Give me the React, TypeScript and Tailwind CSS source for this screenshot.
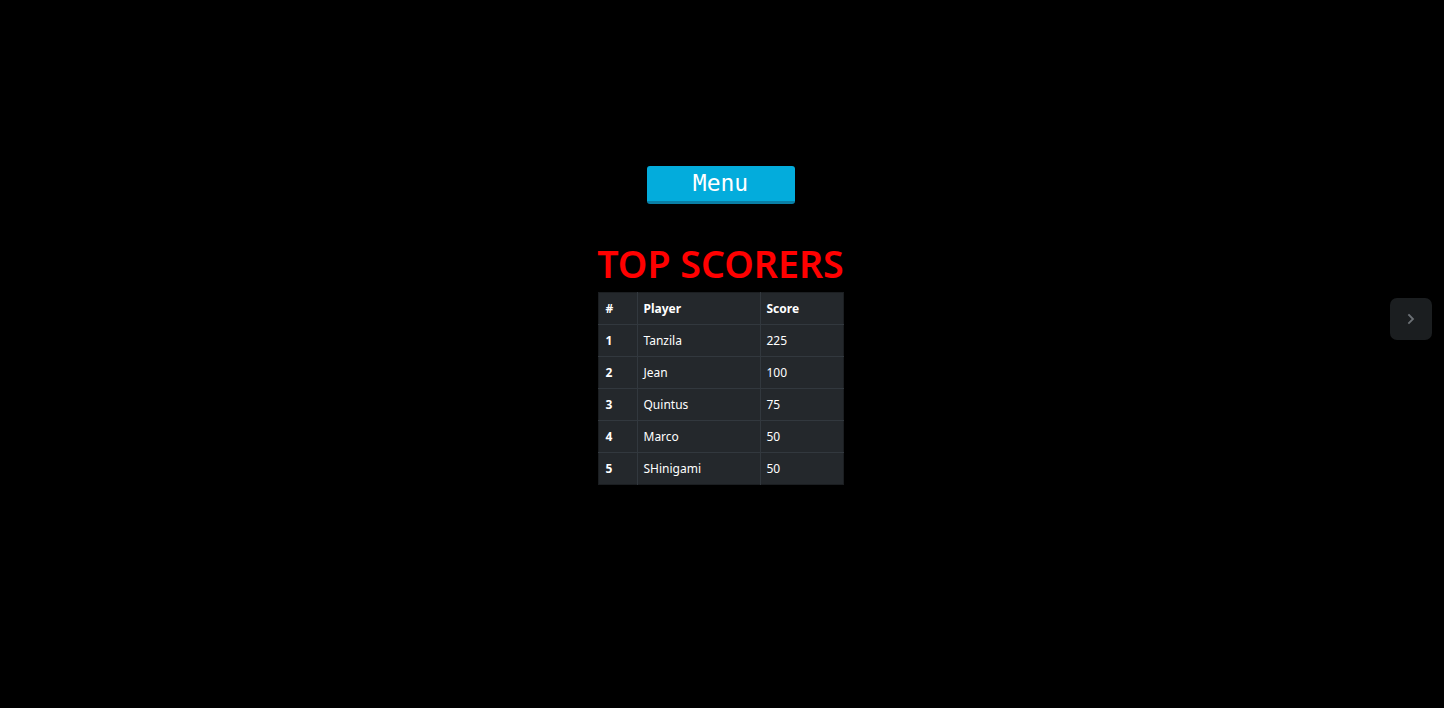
import React from "react";

const rows = [
  { n: 1, p: "Tanzila", s: 225 },
  { n: 2, p: "Jean", s: 100 },
  { n: 3, p: "Quintus", s: 75 },
  { n: 4, p: "Marco", s: 50 },
  { n: 5, p: "SHinigami", s: 50 },
];

export default function App() {
  return (
    <div className="relative w-full h-[708px] bg-black overflow-hidden" style={{ fontFamily: "'Noto Sans', sans-serif" }}>
      <div className="flex flex-col items-center pt-[166px] pr-[3px]">
        <button className="w-[148px] h-[38px] bg-[#03acdc] border-b-[3px] border-[#0a7fa6] rounded-[3px] text-white text-[23px] leading-none flex items-center justify-center" style={{ fontFamily: "'DejaVu Sans Mono', monospace" }}>
          Menu
        </button>
        <h1 className="mt-[37px] mb-[5px] text-[#ff0000] text-[37.6px] font-semibold leading-[46px]">TOP SCORERS</h1>
        <table className="w-[246px] bg-[#24282c] text-white text-[12px] border-collapse border border-[#1b1e21]">
          <thead>
            <tr className="h-[32px]">
              <th className="w-[39px] text-left pl-[7px] font-bold border-r border-b border-[#32383e]">#</th>
              <th className="w-[123px] text-left pl-[6px] font-bold border-r border-b border-[#32383e]">Player</th>
              <th className="text-left pl-[6px] font-bold border-b border-[#32383e]">Score</th>
            </tr>
          </thead>
          <tbody>
            {rows.map((r, i) => (
              <tr key={r.n} className="h-[32px]">
                <td className={`pl-[7px] font-bold border-r border-[#32383e] ${i < 4 ? "border-b" : ""}`}>{r.n}</td>
                <td className={`pl-[6px] border-r border-[#32383e] ${i < 4 ? "border-b" : ""}`}>{r.p}</td>
                <td className={`pl-[6px] border-[#32383e] ${i < 4 ? "border-b" : ""}`}>{r.s}</td>
              </tr>
            ))}
          </tbody>
        </table>
      </div>
      <button className="absolute left-[1390px] top-[298px] w-[42px] h-[42px] rounded-[7px] bg-[#1b1e20] flex items-center justify-center">
        <svg width="14" height="14" viewBox="0 0 14 14" fill="none">
          <path d="M5 3 L9 7 L5 11" stroke="#6c7175" strokeWidth="1.8" strokeLinecap="square" />
        </svg>
      </button>
    </div>
  );
}
